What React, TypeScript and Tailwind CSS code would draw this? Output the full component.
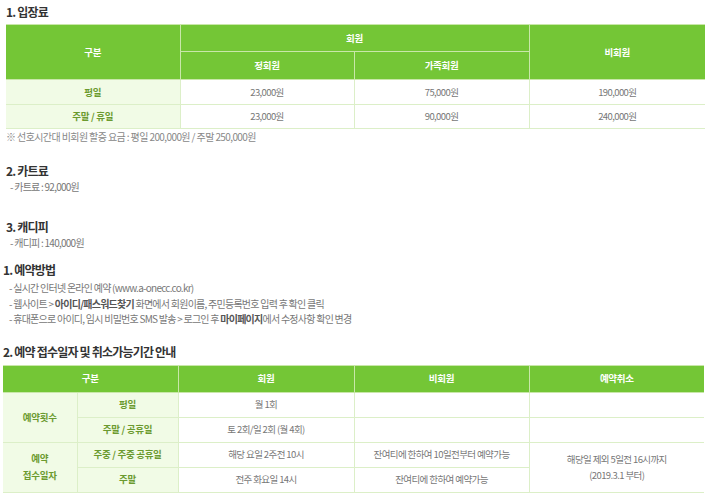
import React from "react";

const font = { fontFamily: '"Noto Sans CJK KR", "Noto Sans", sans-serif' };

const th = "border border-[#c9e7a9] bg-[#74c636] text-white font-bold text-[9.5px] tracking-[-0.3px] text-center align-middle p-0";
const tdLabel = "border border-[#dcefc8] bg-[#f1fbe6] text-[#6b9a2f] font-bold text-[9.5px] tracking-[-0.3px] text-center align-middle p-0";
const td = "border border-[#dcefc8] bg-white text-[#777] text-[9.5px] tracking-[-0.6px] text-center align-middle p-0";

function Title({ children, className = "" }: { children: React.ReactNode; className?: string }) {
  return <div className={"text-[12px] tracking-[-0.8px] leading-[16px] font-semibold text-[#333] " + className}>{children}</div>;
}

const bullet = "text-[10px] tracking-[-0.75px] text-[#777]";

export default function App() {
  return (
    <div style={font} className="w-[709px] h-[498px] overflow-hidden bg-white pl-[3px] pr-[4px] pt-[4px]">
      <div className="ml-[3px]">
        <Title>1. 입장료</Title>
        <table className="mt-[4px] w-[699px] table-fixed border-collapse border-y border-[#c9e7a9]">
          <colgroup>
            <col className="w-[174px]" />
            <col className="w-[174px]" />
            <col className="w-[175px]" />
            <col className="w-[176px]" />
          </colgroup>
          <thead>
            <tr className="h-[27px]">
              <th rowSpan={2} className={th + " border-l-0"}>구분</th>
              <th colSpan={2} className={th}>회원</th>
              <th rowSpan={2} className={th + " border-r-0"}>비회원</th>
            </tr>
            <tr className="h-[28px]">
              <th className={th}>정회원</th>
              <th className={th}>가족회원</th>
            </tr>
          </thead>
          <tbody>
            <tr className="h-[25px]">
              <td className={tdLabel + " border-l-0"}>평일</td>
              <td className={td}>23,000원</td>
              <td className={td}>75,000원</td>
              <td className={td + " border-r-0"}>190,000원</td>
            </tr>
            <tr className="h-[24px]">
              <td className={tdLabel + " border-l-0"}>주말 / 휴일</td>
              <td className={td}>23,000원</td>
              <td className={td}>90,000원</td>
              <td className={td + " border-r-0"}>240,000원</td>
            </tr>
          </tbody>
        </table>
        <div className="text-[10px] tracking-[-0.6px] leading-[15px] text-[#888]">※ 선호시간대 비회원 할증 요금 : 평일 200,000원 / 주말 250,000원</div>

        <Title className="mt-[19px]">2. 카트료</Title>
        <div className={bullet + " leading-[16px] pl-[4px]"}>- 카트료 : 92,000원</div>

        <Title className="mt-[24px]">3. 캐디피</Title>
        <div className={bullet + " leading-[16px] pl-[4px]"}>- 캐디피 : 140,000원</div>
      </div>

      <Title className="mt-[11px]">1. 예약방법</Title>
      <div className={bullet + " mt-[2px] leading-[15.5px] pl-[6px]"}>
        <div>- 실시간 인터넷 온라인 예약 (www.a-onecc.co.kr)</div>
        <div>- 웹사이트 &gt; <span className="font-bold text-[#555]">아이디/패스워드찾기</span> 화면에서 회원이름, 주민등록번호 입력 후 확인 클릭</div>
        <div>- 휴대폰으로 아이디, 임시 비밀번호 SMS 발송 &gt; 로그인 후 <span className="font-bold text-[#555]">마이페이지</span>에서 수정사항 확인 변경</div>
      </div>

      <Title className="mt-[17px]">2. 예약 접수일자 및 취소가능기간 안내</Title>
      <table className="mt-[5px] w-[701px] table-fixed border-collapse border-y border-[#c9e7a9]">
        <colgroup>
          <col className="w-[74px]" />
          <col className="w-[101px]" />
          <col className="w-[176px]" />
          <col className="w-[175px]" />
          <col className="w-[175px]" />
        </colgroup>
        <thead>
          <tr className="h-[27px]">
            <th colSpan={2} className={th + " border-l-0"}>구분</th>
            <th className={th}>회원</th>
            <th className={th}>비회원</th>
            <th className={th + " border-r-0"}>예약취소</th>
          </tr>
        </thead>
        <tbody>
          <tr className="h-[25px]">
            <td rowSpan={2} className={tdLabel + " border-l-0"}>예약횟수</td>
            <td className={tdLabel}>평일</td>
            <td className={td}>월 1회</td>
            <td className={td}></td>
            <td className={td + " border-r-0"}></td>
          </tr>
          <tr className="h-[25px]">
            <td className={tdLabel}>주말 / 공휴일</td>
            <td className={td}>토 2회/일 2회 (월 4회)</td>
            <td className={td}></td>
            <td className={td + " border-r-0"}></td>
          </tr>
          <tr className="h-[25px]">
            <td rowSpan={2} className={tdLabel + " border-l-0 leading-[17px]"}>예약<br />접수일자</td>
            <td className={tdLabel}>주중 / 주중 공휴일</td>
            <td className={td}>해당 요일 2주전 10시</td>
            <td className={td}>잔여티에 한하여 10일전부터 예약가능</td>
            <td rowSpan={2} className={td + " border-r-0 leading-[16px]"}>해당일 제외 5일전 16시까지<br />(2019.3.1 부터)</td>
          </tr>
          <tr className="h-[25px]">
            <td className={tdLabel}>주말</td>
            <td className={td}>전주 화요일 14시</td>
            <td className={td}>잔여티에 한하여 예약가능</td>
          </tr>
        </tbody>
      </table>
    </div>
  );
}
